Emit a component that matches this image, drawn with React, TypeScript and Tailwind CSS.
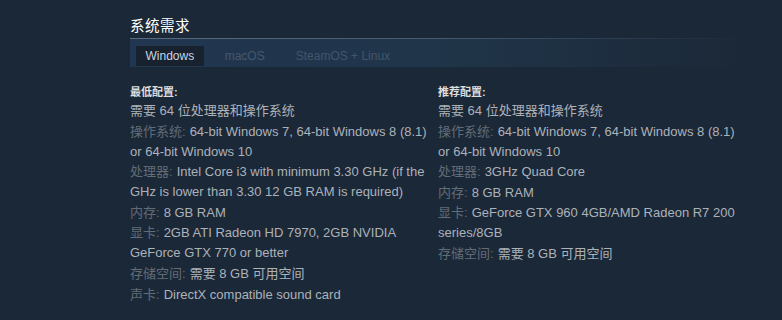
import React from "react";

const FONT = '"Liberation Sans", Arial, "Noto Sans CJK SC", sans-serif';

type Item = { label?: string; value: string };

const minItems: Item[] = [
  { value: "需要 64 位处理器和操作系统" },
  { label: "操作系统:", value: "64-bit Windows 7, 64-bit Windows 8 (8.1) or 64-bit Windows 10" },
  { label: "处理器:", value: "Intel Core i3 with minimum 3.30 GHz (if the GHz is lower than 3.30 12 GB RAM is required)" },
  { label: "内存:", value: "8 GB RAM" },
  { label: "显卡:", value: "2GB ATI Radeon HD 7970, 2GB NVIDIA GeForce GTX 770 or better" },
  { label: "存储空间:", value: "需要 8 GB 可用空间" },
  { label: "声卡:", value: "DirectX compatible sound card" },
];

const recItems: Item[] = [
  { value: "需要 64 位处理器和操作系统" },
  { label: "操作系统:", value: "64-bit Windows 7, 64-bit Windows 8 (8.1) or 64-bit Windows 10" },
  { label: "处理器:", value: "3GHz Quad Core" },
  { label: "内存:", value: "8 GB RAM" },
  { label: "显卡:", value: "GeForce GTX 960 4GB/AMD Radeon R7 200 series/8GB" },
  { label: "存储空间:", value: "需要 8 GB 可用空间" },
];

function Column({ title, items }: { title: string; items: Item[] }) {
  return (
    <div>
      <div className="text-[11px] font-bold text-[#dcdedf] leading-[16px] mt-[3px] mb-[1px]">{title}</div>
      <ul>
        {items.map((it, i) => (
          <li key={i} className="text-[13px] leading-[20px] text-[#acb2b8] mb-[0.6px]">
            {it.label && <span className="text-[#626c76] mr-[4px]">{it.label}</span>}
            {it.value}
          </li>
        ))}
      </ul>
    </div>
  );
}

export default function App() {
  return (
    <div className="w-[782px] h-[320px] bg-[#1b2838] overflow-hidden" style={{ fontFamily: FONT }}>
      <div className="ml-[130px] pt-[17px] w-[616px]">
        <h2 className="text-[14.5px] leading-[18px] text-[#ffffff] tracking-[0.5px]">系统需求</h2>
        <div className="mt-[3px] h-px bg-gradient-to-r from-[#5a6b7e] via-[#465a70] to-transparent" />
        <div className="h-[28px] bg-gradient-to-r from-[#213650] via-[#203549] to-[#1b2838] flex items-end pl-[6px] gap-[11px] pb-[1px]">
          <div className="h-[20px] px-[9.5px] bg-[#18222f] text-[12px] leading-[20px] text-[#c7d5e0]">Windows</div>
          <div className="h-[20px] px-[10px] text-[12px] leading-[20px] text-[#45586e]">macOS</div>
          <div className="h-[20px] px-[10px] text-[12px] leading-[20px] text-[#42556b]">SteamOS + Linux</div>
        </div>
        <div className="mt-[14px] grid grid-cols-[300px_305px] gap-x-[8px]">
          <Column title="最低配置:" items={minItems} />
          <Column title="推荐配置:" items={recItems} />
        </div>
      </div>
    </div>
  );
}
